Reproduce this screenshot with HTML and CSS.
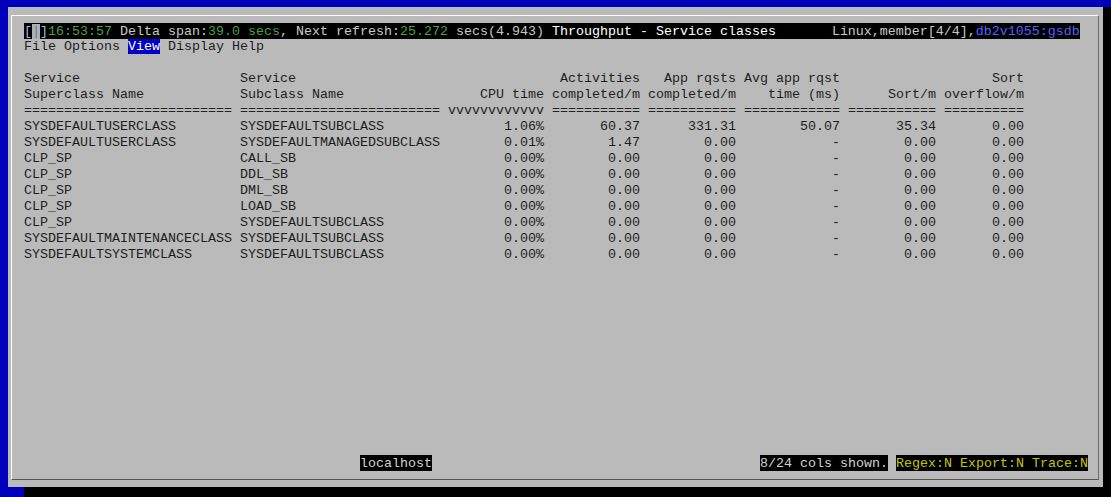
FILE: index.html
```html
<!DOCTYPE html>
<html>
<head>
<meta charset="utf-8">
<title>Throughput - Service classes</title>
<link rel="stylesheet" href="styles.css">
</head>
<body>
<div class="window">
  <div class="frame">
    <div class="titlebar"><span class="c-br">[</span><span class="c-cur">|</span><span class="c-br">]</span><span class="c-green">16:53:57</span><span class="c-lt"> Delta span:</span><span class="c-green">39.0 secs</span><span class="c-lt">, Next refresh:</span><span class="c-green">25.272</span><span class="c-lt"> secs(4.943)</span><span class="c-wh"> Throughput - Service classes</span><span class="c-lt">       Linux,member[4/4],</span><span class="c-blue">db2v1055:gsdb</span></div>
    <div class="menubar"><span>File</span> <span>Options</span> <span class="sel">View</span> <span>Display</span> <span>Help</span></div>

    <div class="grid">
      <div class="hd"><span>Service</span><span>Superclass Name</span></div>
      <div class="hd"><span>Service</span><span>Subclass Name</span></div>
      <div class="hd r"><span>&nbsp;</span><span>CPU time</span></div>
      <div class="hd r"><span>Activities</span><span>completed/m</span></div>
      <div class="hd r"><span>App rqsts</span><span>completed/m</span></div>
      <div class="hd r"><span>Avg app rqst</span><span>time (ms)</span></div>
      <div class="hd r"><span>&nbsp;</span><span>Sort/m</span></div>
      <div class="hd r"><span>Sort</span><span>overflow/m</span></div>

      <div>==========================</div>
      <div>=========================</div>
      <div>vvvvvvvvvvvv</div>
      <div>===========</div>
      <div>===========</div>
      <div>============</div>
      <div>===========</div>
      <div>==========</div>

      <div>SYSDEFAULTUSERCLASS</div><div>SYSDEFAULTSUBCLASS</div><div class="r">1.06%</div><div class="r">60.37</div><div class="r">331.31</div><div class="r">50.07</div><div class="r">35.34</div><div class="r">0.00</div>
      <div>SYSDEFAULTUSERCLASS</div><div>SYSDEFAULTMANAGEDSUBCLASS</div><div class="r">0.01%</div><div class="r">1.47</div><div class="r">0.00</div><div class="r">-</div><div class="r">0.00</div><div class="r">0.00</div>
      <div>CLP_SP</div><div>CALL_SB</div><div class="r">0.00%</div><div class="r">0.00</div><div class="r">0.00</div><div class="r">-</div><div class="r">0.00</div><div class="r">0.00</div>
      <div>CLP_SP</div><div>DDL_SB</div><div class="r">0.00%</div><div class="r">0.00</div><div class="r">0.00</div><div class="r">-</div><div class="r">0.00</div><div class="r">0.00</div>
      <div>CLP_SP</div><div>DML_SB</div><div class="r">0.00%</div><div class="r">0.00</div><div class="r">0.00</div><div class="r">-</div><div class="r">0.00</div><div class="r">0.00</div>
      <div>CLP_SP</div><div>LOAD_SB</div><div class="r">0.00%</div><div class="r">0.00</div><div class="r">0.00</div><div class="r">-</div><div class="r">0.00</div><div class="r">0.00</div>
      <div>CLP_SP</div><div>SYSDEFAULTSUBCLASS</div><div class="r">0.00%</div><div class="r">0.00</div><div class="r">0.00</div><div class="r">-</div><div class="r">0.00</div><div class="r">0.00</div>
      <div>SYSDEFAULTMAINTENANCECLASS</div><div>SYSDEFAULTSUBCLASS</div><div class="r">0.00%</div><div class="r">0.00</div><div class="r">0.00</div><div class="r">-</div><div class="r">0.00</div><div class="r">0.00</div>
      <div>SYSDEFAULTSYSTEMCLASS</div><div>SYSDEFAULTSUBCLASS</div><div class="r">0.00%</div><div class="r">0.00</div><div class="r">0.00</div><div class="r">-</div><div class="r">0.00</div><div class="r">0.00</div>
    </div>

    <div class="status">
      <span class="blk host">localhost</span>
      <span class="blk cols">8/24 cols shown.</span>
      <span class="blk yel flags">Regex:N Export:N Trace:N</span>
    </div>
  </div>
</div>
</body>
</html>
```
FILE: styles.css
```css
* {
  box-sizing: border-box;
}

html,
body {
  margin: 0;
  padding: 0;
}

body {
  width: 1111px;
  height: 497px;
  overflow: hidden;
  background: #0000bc;
  font-family: "Liberation Mono", "Courier New", monospace;
  font-size: 13.3333px;
  line-height: 16px;
  color: #1e1e1e;
}

.window {
  margin: 7px 0 0 8px;
  width: 1095px;
  height: 480px;
  background: #bababa;
  box-shadow: 8px 0 0 #000, 16px 10px 0 #000;
  padding: 8px 4px 7px 3px;
  display: flex;
}

.frame {
  flex: 1;
  display: flex;
  flex-direction: column;
  border-top: 1px solid #ffffff;
  border-left: 1px solid #ffffff;
  border-right: 1px solid #6a6a6a;
  border-bottom: 1px solid #555555;
  padding: 8px 0 8px 12px;
}

.titlebar {
  align-self: flex-start;
  width: 1056px;
  margin-top: -1px;
  padding-top: 1px;
  line-height: 15px;
  background: #000;
  white-space: pre;
}

.c-br { color: #9ab8dc; }
.c-cur { color: #5a7cb4; background: #b0b0b0; }
.c-green { color: #4e9e4e; }
.c-lt { color: #c8c8c8; }
.c-wh { color: #ffffff; }
.c-blue { color: #5060ff; }

.menubar {
  white-space: pre;
  margin-bottom: 16px;
}

.menubar .sel {
  background: #0000c8;
  color: #ffffff;
}

.grid {
  display: grid;
  grid-template-columns: 208px 200px 96px 88px 88px 96px 88px 80px;
  column-gap: 8px;
}

.grid > div {
  white-space: pre;
}

.hd span {
  display: block;
}

.r {
  text-align: right;
}

.status {
  margin-top: auto;
  display: flex;
  white-space: pre;
}

.blk {
  background: #000;
  color: #d2d2d2;
  padding-top: 1px;
  line-height: 15px;
}

.host {
  margin-left: 336px;
}

.cols {
  margin-left: 328px;
}

.flags {
  margin-left: 8px;
}

.yel {
  color: #c4c400;
}
```
